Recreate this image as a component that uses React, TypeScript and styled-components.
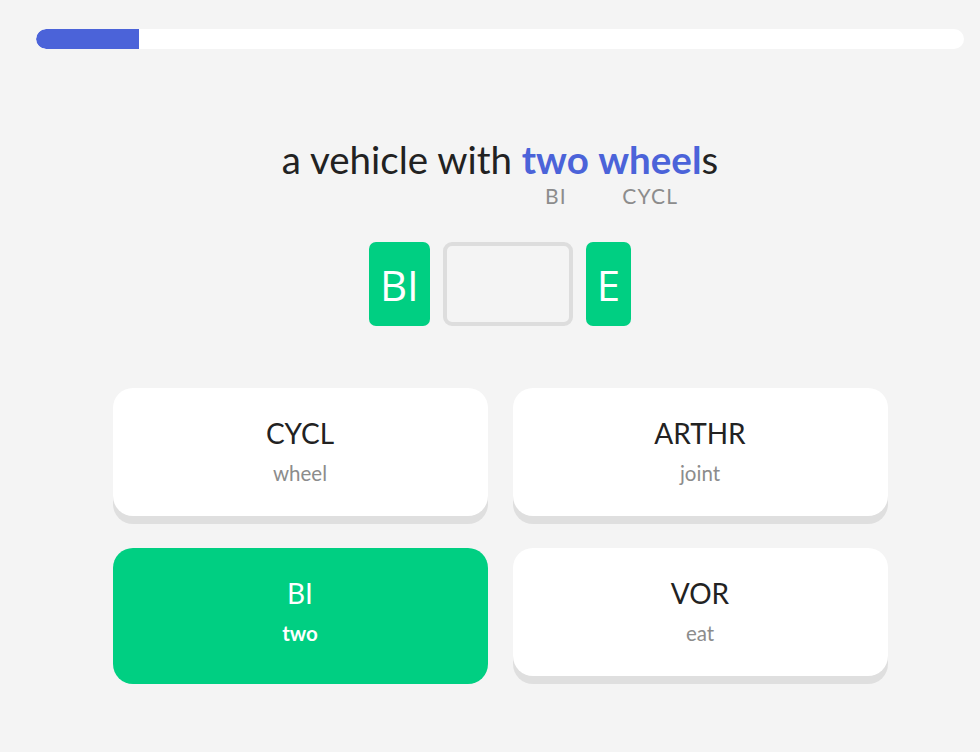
import React from "react";
import styled, { createGlobalStyle } from "styled-components";

const GlobalStyle = createGlobalStyle`
  html, body {
    margin: 0;
    padding: 0;
    background: #f4f4f4;
  }
  body {
    font-family: Lato, "Noto Sans", sans-serif;
  }
`;

const Page = styled.div`
  box-sizing: border-box;
  width: 980px;
  min-height: 752px;
  padding: 29px 0 0 20px;
  display: flex;
  flex-direction: column;
  align-items: center;
`;

const Column = styled.div`
  width: 960px;
  display: flex;
  flex-direction: column;
  align-items: center;
`;

const Track = styled.div`
  box-sizing: border-box;
  width: 928px;
  height: 20px;
  background: #ffffff;
  border-radius: 10px;
  overflow: hidden;
  display: flex;
`;

const Fill = styled.div`
  height: 100%;
  background: #4b63d9;
  border-radius: 10px 0 0 10px;
`;

const Prompt = styled.div`
  margin-top: 87px;
  text-align: center;
  font-size: 38.5px;
  line-height: 46px;
  color: #222222;
  white-space: nowrap;
`;

const Segment = styled.span`
  display: inline-flex;
  flex-direction: column;
  align-items: center;
  vertical-align: top;
  font-weight: 700;
  color: #4b63d9;
`;

const Strong = styled.span`
  font-weight: 700;
  color: #4b63d9;
`;

const Hint = styled.span`
  font-size: 21px;
  line-height: 24px;
  font-weight: 400;
  letter-spacing: 1.2px;
  padding-left: 1px;
  color: #8c8c8c;
  margin-top: 2px;
`;

const Slots = styled.div`
  margin-top: 34px;
  display: flex;
  gap: 13px;
  height: 84px;
`;

const Tile = styled.div`
  box-sizing: border-box;
  height: 84px;
  padding: 0 11px;
  border-radius: 7px;
  background: #00cf82;
  color: #ffffff;
  font-family: "Open Sans", "Noto Sans", sans-serif;
  font-size: 42px;
  font-weight: 400;
  display: flex;
  align-items: center;
  justify-content: center;
`;

const EmptySlot = styled.div`
  box-sizing: border-box;
  width: 130px;
  height: 84px;
  border: 4px solid #dddddd;
  border-radius: 9px;
`;

const Choices = styled.div`
  margin-top: 62px;
  display: grid;
  grid-template-columns: 375px 375px;
  column-gap: 25px;
  row-gap: 32px;
`;

const Card = styled.div<{ $selected?: boolean }>`
  box-sizing: border-box;
  height: 128px;
  border-radius: 20px;
  background: ${(p) => (p.$selected ? "#00cf82" : "#ffffff")};
  box-shadow: 0 8px 0 ${(p) => (p.$selected ? "#00cf82" : "#dfdfdf")};
  display: flex;
  flex-direction: column;
  align-items: center;
  padding-top: 28px;
`;

const Root = styled.div<{ $selected?: boolean }>`
  font-size: 28px;
  line-height: 34px;
  color: ${(p) => (p.$selected ? "#ffffff" : "#222222")};
`;

const Meaning = styled.div<{ $selected?: boolean }>`
  margin-top: 11px;
  font-size: 20.5px;
  line-height: 24px;
  font-weight: ${(p) => (p.$selected ? 700 : 400)};
  color: ${(p) => (p.$selected ? "#ffffff" : "#8c8c8c")};
`;

const choices = [
  { root: "CYCL", meaning: "wheel" },
  { root: "ARTHR", meaning: "joint" },
  { root: "BI", meaning: "two", selected: true },
  { root: "VOR", meaning: "eat" },
];

export default function App() {
  return (
    <>
      <GlobalStyle />
      <Page>
        <Column>
          <Track>
            <Fill style={{ width: `${(103 / 928) * 100}%` }} />
          </Track>
          <Prompt>
            a vehicle with{" "}
            <Segment>
              two
              <Hint>BI</Hint>
            </Segment>
            <Strong> </Strong>
            <Segment>
              wheel
              <Hint>CYCL</Hint>
            </Segment>
            s
          </Prompt>
          <Slots>
            <Tile>BI</Tile>
            <EmptySlot />
            <Tile>E</Tile>
          </Slots>
          <Choices>
            {choices.map((c) => (
              <Card key={c.root} $selected={c.selected}>
                <Root $selected={c.selected}>{c.root}</Root>
                <Meaning $selected={c.selected}>{c.meaning}</Meaning>
              </Card>
            ))}
          </Choices>
        </Column>
      </Page>
    </>
  );
}
